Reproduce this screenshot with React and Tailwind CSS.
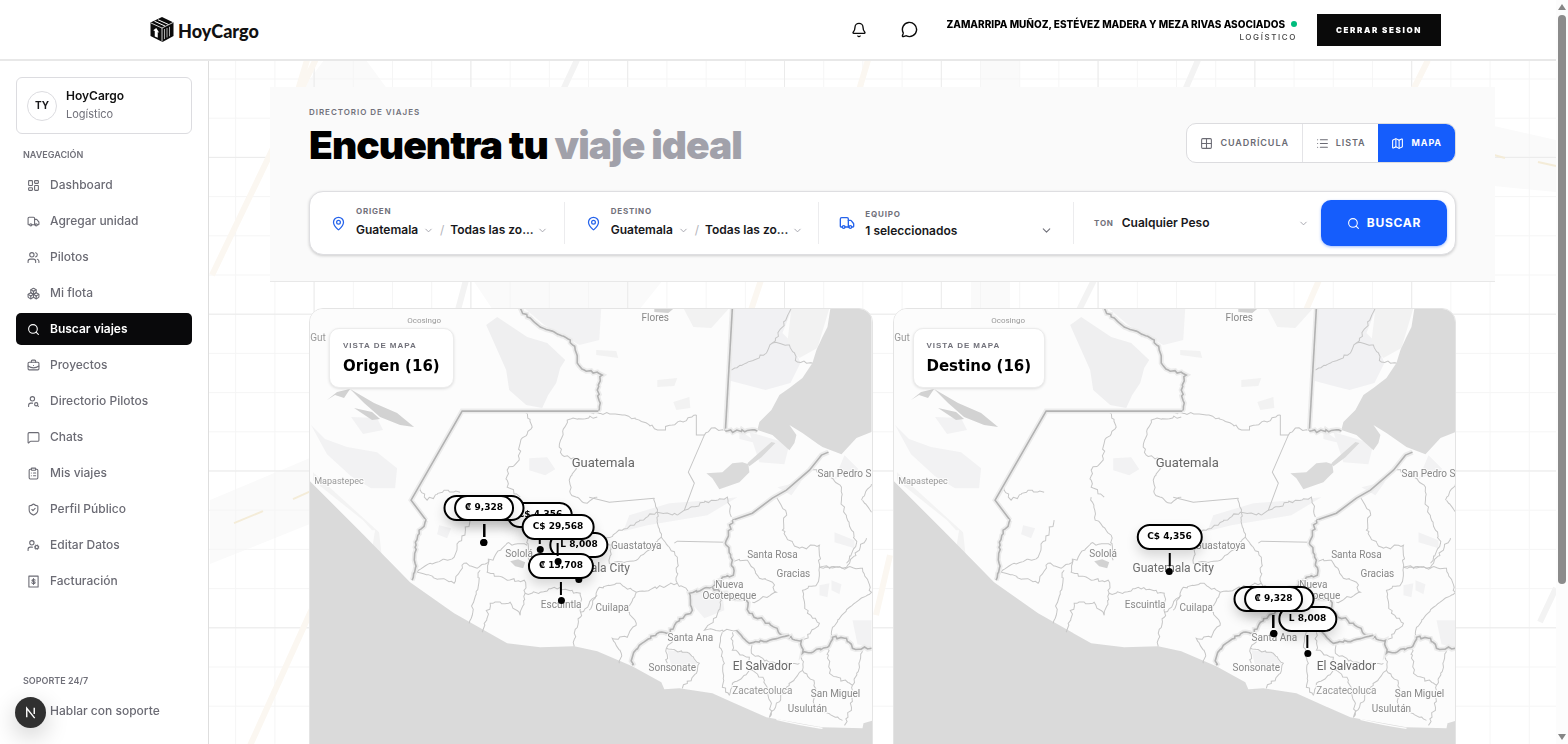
import {
  LayoutDashboard, Truck, Users, Boxes, Search, BriefcaseBusiness, UserSearch, MessageSquare,
  ClipboardList, ShieldCheck, UserCog, Bell, MessageCircle, Grid2x2, List, Map as MapIcon,
  MapPin, ChevronDown, Headphones,
} from "lucide-react";

const NAV = [
  ["Dashboard", LayoutDashboard],
  ["Agregar unidad", Truck],
  ["Pilotos", Users],
  ["Mi flota", Boxes],
  ["Buscar viajes", Search],
  ["Proyectos", BriefcaseBusiness],
  ["Directorio Pilotos", UserSearch],
  ["Chats", MessageSquare],
  ["Mis viajes", ClipboardList],
  ["Perfil Público", ShieldCheck],
  ["Editar Datos", UserCog],
  ["Facturación", InvoiceIcon],
];

function InvoiceIcon({ className, strokeWidth = 2 }) {
  return (
    <svg className={className} viewBox="0 0 24 24" fill="none" stroke="currentColor" strokeWidth={strokeWidth} strokeLinecap="round" strokeLinejoin="round" aria-hidden="true">
      <path d="M3.500 2h17v20h-17z" />
      <path d="M15 9.500c-.6-1-1.700-1.300-3-1.300-1.700 0-2.900.7-2.900 1.900 0 2.700 6 1.200 6 3.900 0 1.200-1.300 1.900-3.100 1.900-1.400 0-2.600-.5-3.200-1.500M12 6.500v11" />
    </svg>
  );
}

function Logo() {
  return (
    <a href="#inicio" className="flex items-center gap-1 text-[#111111]">
      <svg viewBox="0 0 48 50" className="h-[25px] w-6" aria-hidden="true">
        <path d="M24 0 47 11v27L25 50 1 38V11z" fill="#0b0b0b" />
        <path d="M2 12 24 22 46 11M24 22v27" stroke="#fff" strokeWidth="1.600" fill="none" />
        <path d="M9 8.500 30 18M16 5.500 37 15" stroke="#fff" strokeWidth="2" fill="none" />
        <path d="M29 24v20M34 22v19M39 19.500v19" stroke="#fff" strokeWidth="1.300" fill="none" />
        <path d="M9.500 39V28l-3-1.500 6-4.500 6 9.500-3-1.300v11.500z" fill="#fff" />
      </svg>
      <span className="pt-[2px] font-[Lato,sans-serif] text-[18px] font-black leading-6">HoyCargo</span>
    </a>
  );
}

function Header() {
  return (
    <header className="flex h-[61px] shrink-0 items-center justify-between border-b-2 border-[#e8e8e8] bg-white pl-[150px] pr-[115px]">
      <Logo />
      <div className="flex items-center">
        <button type="button" aria-label="Notificaciones" className="mr-[34px]"><Bell className="size-4" /></button>
        <button type="button" aria-label="Mensajes" className="mr-7"><MessageCircle className="size-[17px]" /></button>
        <div className="mr-5 flex flex-col items-end">
          <span className="flex items-center gap-[6px] text-[10px] font-extrabold leading-[14px] text-black">
            ZAMARRIPA MUÑOZ, ESTÉVEZ MADERA Y MEZA RIVAS ASOCIADOS
            <span className="size-[6px] rounded-full bg-emerald-500" />
          </span>
          <span className="text-[8px] font-medium leading-3 tracking-[0.2em] text-[#444444]">LOGÍSTICO</span>
        </div>
        <button type="button" className="h-8 w-[124px] bg-[#0a0a0a] text-[8px] font-black tracking-[0.2em] text-white">CERRAR SESION</button>
      </div>
    </header>
  );
}

function Sidebar() {
  return (
    <aside className="flex w-[209px] shrink-0 flex-col border-r border-[#dedede] bg-white px-4 pb-[17px] pt-4">
      <div className="flex h-[57px] items-center gap-[9px] rounded-md border border-[#dcdce0] px-[10px]">
        <span className="flex size-[30px] items-center justify-center rounded-full border border-[#dcdce0] text-[10px] font-bold text-[#18181b]">TY</span>
        <div className="flex flex-col pb-px">
          <strong className="text-[12px] font-semibold leading-[18px] text-[#111111]">HoyCargo</strong>
          <span className="text-[11px] leading-[18px] text-[#71717a]">Logístico</span>
        </div>
      </div>
      <h2 className="mb-[5px] mt-3 px-[7px] text-[9px] font-semibold leading-[18px] text-[#71717a]">NAVEGACIÓN</h2>
      <nav className="flex flex-col gap-1">
        {NAV.map(([label, Icon]) => (
          <a
            key={label}
            href="#nav"
            className={
              label === "Buscar viajes"
                ? "flex h-8 items-center gap-[10px] rounded-[5px] bg-[#09090b] px-[11px] text-[12px] font-semibold text-white"
                : "flex h-8 items-center gap-[10px] rounded-[5px] px-[11px] text-[12px] font-medium text-[#6b6b74]"
            }
          >
            <Icon className="size-[13px] shrink-0" strokeWidth={2} />
            {label}
          </a>
        ))}
      </nav>
      <h2 className="mb-[5px] mt-auto px-[7px] text-[9px] font-semibold leading-[18px] text-[#71717a]">SOPORTE 24/7</h2>
      <div className="relative">
        <a href="#soporte" className="flex h-8 items-center gap-[10px] px-[11px] text-[12px] font-medium text-[#6b6b74]">
          <Headphones className="size-[13px] shrink-0" />
          Hablar con soporte
        </a>
        <button type="button" aria-label="Herramientas" className="absolute -left-px top-[2px] flex size-[31px] items-center justify-center rounded-full bg-[#303030] shadow-[0_8px_24px_rgba(0,0,0,0.2)]">
          <svg viewBox="0 0 16 16" className="size-[15px]" fill="none" stroke="#fff" strokeWidth="1.500" aria-hidden="true">
            <path d="M4 13V3.500l8.500 10.500" />
            <path d="M12 3v6.500" />
          </svg>
        </button>
      </div>
    </aside>
  );
}

/* Blueprint style street pattern behind the page. */
function Backdrop() {
  return (
    <svg className="pointer-events-none fixed left-0 top-0 h-[744px] w-[1568px]" viewBox="0 0 1600 759" aria-hidden="true">
      <defs>
        <pattern id="minor" width="40" height="40" patternUnits="userSpaceOnUse"><path d="M40 0H0V40" fill="none" stroke="#f5f5f5" strokeWidth="2" /></pattern>
        <pattern id="major" width="160" height="160" patternUnits="userSpaceOnUse"><path d="M160 0H0V160" fill="none" stroke="#ebebeb" strokeWidth="2" /></pattern>
      </defs>
      <g transform="scale(1.0204)">
        <g fill="#fafafa">
          <path d="M324 60h42l22 30h-86zM980 60h39v30h-39zM210 500l100-42v66l-100 40zM473 280h190l-24 30H493zM971 280h39v30h-39zM1494 126l62 14v52l-62-6z" />
        </g>
      </g>
      <rect width="1600" height="759" fill="url(#minor)" />
      <rect width="1600" height="759" fill="url(#major)" />
      <g transform="scale(1.0204)" fill="none" strokeWidth="6">
        <path d="M325 40 212 275M325 580l-77 170M310 50l-12 40M868 60l-9 30M1428 60l-15 30M761 280l-10 30M1319 280l-13 30M890 555l-14 60" stroke="#fbf7f1" />
        <path d="M577 60l-14 30M1198 60l-13 30M466 280l-8 30M1094 280l-15 30M1556 588l-16 34" stroke="#f3f3f3" />
        <path d="M234 523l29-12M293 499l20-9M1494 155l11 3M1538 162l18 4" stroke="#f4ecd8" strokeWidth="2" />
      </g>
    </svg>
  );
}

function ViewToggle() {
  return (
    <div className="flex h-10 overflow-hidden rounded-[10px] border border-[#dcdcdf] bg-white text-[9px] font-semibold tracking-[0.1em] text-[#6b6b74]">
      <button type="button" className="flex items-center gap-[7px] border-r border-[#e4e4e7] px-[13px]"><Grid2x2 className="size-[13px]" />CUADRÍCULA</button>
      <button type="button" className="flex items-center gap-[7px] px-[13px]"><List className="size-[13px]" />LISTA</button>
      <button type="button" aria-pressed="true" className="flex items-center gap-[7px] bg-[#155dfc] px-[13px] font-bold text-white"><MapIcon className="size-[13px]" />MAPA</button>
    </div>
  );
}

function PlainSelect({ label, value, className }) {
  return (
    <span className="flex items-center gap-[3px]">
      <select aria-label={label} className={className}>
        <option>{value}</option>
      </select>
      <ChevronDown className="size-[11px] text-[#a1a1aa]" aria-hidden="true" />
    </span>
  );
}

function PlaceField({ title }) {
  return (
    <fieldset className="flex h-[42px] min-w-0 items-center gap-[10px] border-r border-[#ececee] pl-[21px]">
      <MapPin className="size-[15px] shrink-0 text-[#2563eb]" aria-hidden="true" />
      <div className="flex flex-col pb-1">
        <span className="text-[8px] font-bold leading-[18px] tracking-[0.1em] text-[#71717a]">{title}</span>
        <div className="flex items-center gap-[6px] text-[12px] font-semibold leading-5 text-[#18181b]">
          <PlainSelect label={"País de " + title.toLowerCase()} value="Guatemala" className="w-16 appearance-none bg-transparent" />
          <span className="font-normal text-[#b4b4bb]">/</span>
          <PlainSelect label={"Zona de " + title.toLowerCase()} value="Todas las zo..." className="w-[84px] appearance-none bg-transparent" />
        </div>
      </div>
    </fieldset>
  );
}

function SearchBar() {
  return (
    <form className="grid h-16 grid-cols-[minmax(0,1fr)_minmax(0,1fr)_minmax(0,1fr)_247px_126px] items-center rounded-[14px] border border-[#dedee1] bg-white pr-2 shadow-[0_1px_3px_rgba(0,0,0,0.18)]">
      <PlaceField title="ORIGEN" />
      <PlaceField title="DESTINO" />
      <div className="flex h-[42px] items-center gap-[10px] border-r border-[#ececee] pl-5 pr-5">
        <Truck className="size-4 shrink-0 text-[#2563eb]" aria-hidden="true" />
        <button type="button" className="flex flex-1 flex-col pb-px text-left">
          <span className="text-[8px] font-bold leading-4 tracking-[0.1em] text-[#71717a]">EQUIPO</span>
          <span className="flex w-full items-center justify-between text-[12px] font-semibold leading-[18px] text-[#18181b]">
            1 seleccionados
            <ChevronDown className="size-[13px] text-[#71717a]" />
          </span>
        </button>
      </div>
      <label className="flex h-[42px] items-center gap-2 pl-5">
        <span className="text-[8px] font-bold tracking-[0.1em] text-[#71717a]">TON</span>
        <select className="flex-1 appearance-none bg-transparent text-[12px] font-semibold text-[#18181b]">
          <option>Cualquier Peso</option>
        </select>
        <ChevronDown className="mr-3 size-[11px] text-[#a1a1aa]" aria-hidden="true" />
      </label>
      <button type="button" className="flex h-[46px] items-center justify-center gap-[7px] rounded-[10px] bg-[#155dfc] text-[12px] font-bold tracking-[0.06em] text-white shadow-[0_1px_3px_rgba(21,93,252,0.4)]">
        <Search className="size-[13px]" />
        BUSCAR
      </button>
    </form>
  );
}

/* Roughens a polyline so that it reads as a river or hill boundary. */
function jag(points, seed) {
  const nums = points.split(" ").map((p) => p.split(",").map(Number));
  let s = seed * 7919 + 13;
  const rnd = () => {
    s = (s * 1103515245 + 12345) % 2147483648;
    return s / 2147483648 - 0.5;
  };
  let d = "M" + nums[0].join(" ");
  for (let i = 1; i < nums.length; i++) {
    const [ax, ay] = nums[i - 1];
    const [bx, by] = nums[i];
    const steps = Math.max(1, Math.round(Math.hypot(bx - ax, by - ay) / 3));
    for (let k = 1; k <= steps; k++) {
      const t = k / steps;
      const j = k === steps ? 0 : 3;
      d += `L${(ax + (bx - ax) * t + rnd() * j).toFixed(1)} ${(ay + (by - ay) * t + rnd() * j).toFixed(1)}`;
    }
  }
  return d;
}

const REGIONS = [
  "590,412 623,415 640,420 662,430 673,425 697,415",
  "705,435 712,428 725,430",
  "678,515 657,512 623,530 590,545",
  "685,510 712,500 728,497 732,517",
  "655,498 658,512 658,520 662,537",
  "792,308 783,327 773,343 767,353 747,363 732,370",
  "773,343 790,345 798,362 813,363",
  "810,468 828,475 842,487 842,500 847,517 852,530 857,543 847,563",
  "777,497 787,513 783,530 787,537 800,548 820,545 820,567 847,567 867,538",
  "863,500 872,512",
  "872,484 862,500",
  "733,560 748,560 760,578 773,582 777,592 753,602",
  "820,567 818,583 803,590 808,613 820,623 803,642",
  "820,567 863,568 872,592 850,607 833,627 833,637",
  "590,530 612,545 610,563 637,560 662,537 678,557 678,583 637,592 617,583 600,587 590,610",
  "678,583 690,593",
  "637,592 627,610 637,623 628,637 613,638 622,653 620,663",
  "673,638 667,648 668,663",
  "667,648 690,653 700,663 697,673 683,688",
  "723,632 720,647 725,663 723,687 730,695",
  "733,632 733,650 750,657 753,670 733,683 730,695",
  "753,670 765,680 772,703 770,717 787,687 803,670 802,640",
  "803,670 815,683 815,707 843,720",
  "752,643 752,653 770,662 800,663",
  "828,647 830,673 853,685 860,667 862,648",
  "853,685 852,707 845,725",
  "737,630 705,630 717,617 722,600 713,588",
  "526,412 533,427 521,443 520,460 508,470 508,487 521,497",
  "598,417 568,420 560,447 563,455 581,460 570,480 571,493 588,503 598,497",
  "412,500 421,487 428,500 445,490 461,492",
  "471,520 458,547 455,557 431,563 418,572 455,583 465,563 478,568 495,557 508,543 528,545",
  "481,570 475,600 470,623",
  "490,560 488,572 508,580 525,580 526,593 541,592 555,587 581,593 581,617 575,633 575,646",
  "483,632 491,603 511,602 521,615 526,593",
  "581,612 598,595",
  "508,497 512,520 528,535 530,560",
];

const STRAIGHT = [
  "697,415 697,435 705,435 689,472 695,483 685,510 678,515",
  "590,497 610,502 655,498",
  "675,543 678,541 727,542",
];

const BORDERS = [
  ["521,308 528,317 541,327 555,332 571,340 576,350 578,363 585,370 598,372 603,375 598,390 601,403 599,411", true],
  ["599,411 463,411 412,500 427,520", false],
  ["427,520 420,530 416,547 416,563 413,580", true],
  ["733,308 726,431", false],
  ["726,431 758,431", true],
  ["829,452 822,455 810,470 787,490 773,498 753,513 733,520", false],
  ["733,520 726,543 733,560 734,575 723,577 713,587 690,593 693,610 677,622 671,633 660,632 640,645 633,657 633,665", true],
  ["713,587 733,598 747,600 750,613 770,623 783,635 802,640 803,653 828,647 833,637 847,638 853,648 872,648", true],
  ["737,630 750,643 770,640 790,635", true],
];

const LABELS = [
  ["Ocosingo", 425, 323, 8, "#999"],
  ["Flores", 656, 321, 10, "#888"],
  ["Gut", 319, 341, 10, "#999"],
  ["Mapastepec", 340, 484, 9, "#999"],
  ["Guatemala", 604, 467, 13, "#666"],
  ["San Pedro S", 845, 477, 10, "#888"],
  ["Guastatoya", 637, 549, 10, "#888"],
  ["Guatemala City", 590, 572, 12, "#6e6e6e"],
  ["Sololá", 520, 557, 10, "#888"],
  ["Santa Rosa", 773, 558, 10, "#888"],
  ["Gracias", 794, 577, 10, "#888"],
  ["Nueva", 730, 588, 10, "#888"],
  ["Ocotepeque", 730, 599, 10, "#888"],
  ["Cuilapa", 613, 611, 10, "#888"],
  ["Escuintla", 562, 608, 10, "#888"],
  ["Santa Ana", 691, 641, 10, "#888"],
  ["Sonsonate", 673, 671, 10, "#888"],
  ["El Salvador", 763, 670, 12, "#666"],
  ["Zacatecoluca", 763, 694, 10, "#999"],
  ["San Miguel", 836, 697, 10, "#888"],
  ["Usulután", 808, 712, 10, "#888"],
];

function Terrain() {
  return (
    <svg className="absolute left-0 top-0 h-[480px] w-full" viewBox="311 309 561 480" preserveAspectRatio="xMinYMin slice" aria-hidden="true">
      <rect x="310" y="308" width="580" height="490" fill="#fcfcfc" />
      <g fill="#f2f2f3">
        <path d="M487 325l11-8 30 20 20 6 18 17-5 8-4 15-8 12-6 13-16-3-17-15-3-20z" fill="#efeff0" />
        <path d="M525 308h77l-2 32-20 5-35-20z" />
        <path d="M733 308h60l-10 25 10 10 8 20-10 20-25 7-38-10z" fill="#f1f1f3" />
        <path d="M792 308h38l-12 40-18 10-12-16zM684 308h46l-18 20-18-1zM597 350l20 1 2 7-22-3zM674 402l16-5 1 11-14 2zM658 380l20-2-3 8-17 1z" fill="#f2f2f2" />
        <path d="M312 425l14 14 22 8 30 5 20 16-2 20-24 0-20-12-24-22zM352 417l26 1 6 12-20 4zM530 458l18-1 8 12-10 6-16-5z" />
        <path d="M630 515l40-12 40-3 28-3-30 18-60 10-24 6zM750 432l40 12-5 20-25-2zM778 487l24-6-10 14zM740 430l20 14-20-5z" />
        <path d="M693 590l30 4 2 16-20 8-12-14zM820 585l10-2-2 14-8-2zM832 580l10 4-2 10-8-4zM853 620h19v28l-14-4zM668 650l22 2 8 12-26 2zM835 532l20 8 0 8-20-6zM440 525l12 3-4 10-10-4zM845 455l14 14-24 10z" />
        <path d="M376 530l-3 0-9-10-50-40 0-8 66 60 4 35-12-12z" fill="#f3f3f3" />
      </g>
      <g fill="#dadada">
        <path d="M310 480l50 50 51 52 44 31 53 30 33 4 34-1 23 5 35 15 29 16 3 7 15-1 33 5 20 9 34 15 56 10 40 1 1-5 10-3V800H310z" />
        <path d="M831 308l-3 19-5 10-6 13-4 13-10 15-13 10-10 7-8 15-12 12-2 8 15 5 17 15 5-7 2-8-7-10 13 8 20 14 19 7 15-16 15-6V300h-41z" />
        <path d="M707 473l16-1 10-9 10-1 6 2 1 8-10 10-20 7-7-11zM748 463l10-9 14-12 4 1-14 14-12 9z" />
        <path d="M328 400l10-8 13-3 24 14 23 10 17 14-14-2-20-8-16-14-14-14-6 9-9-3zM355 408l18 4 8 7-8 1zM655 308h20l-6 5-14-1zM511 561l8-2 7 3-2 6-8-2z" fill="#d2d2d2" />
      </g>
      <path d="M777 719q20 5 46 9" stroke="#fcfcfc" strokeWidth="1.500" fill="none" />
      <g fill="none" stroke="#c6c6c6" strokeWidth="1">
        {REGIONS.map((r, i) => <path key={r} d={jag(r, i + 1)} />)}
        {STRAIGHT.map((r) => <polyline key={r} points={r} />)}
      </g>
      {BORDERS.map(([pts, rough], i) => {
        const d = rough ? jag(pts, i + 60) : "M" + pts.replace(/ /g, "L");
        return (
          <g key={pts} fill="none">
            <path d={d} stroke="#ececec" strokeWidth="5" />
            <path d={d} stroke="#b2b2b2" strokeWidth="1.600" />
          </g>
        );
      })}
      <g fontFamily="Roboto, sans-serif" textAnchor="middle" stroke="#fcfcfc" strokeWidth="2" paintOrder="stroke">
        {LABELS.map(([t, x, y, size, fill]) => <text key={t} x={x} y={y} fontSize={size} fill={fill}>{t}</text>)}
      </g>
    </svg>
  );
}

function Pin({ label, x, y, wide }) {
  return (
    <div className="absolute flex -translate-x-1/2 flex-col items-center" style={{ left: x, top: y }}>
      <button
        type="button"
        className={
          wide
            ? "h-[26px] w-[81px] rounded-full border-2 border-black bg-white shadow-[0_6px_12px_rgba(0,0,0,0.15)]"
            : "h-[26px] whitespace-nowrap rounded-full border-2 border-black bg-white px-[9px] font-['DejaVu_Sans',sans-serif] text-[9px] font-bold text-black shadow-[0_6px_12px_rgba(0,0,0,0.15)]"
        }
        aria-label={wide ? "Viaje" : undefined}
      >
        {label}
      </button>
      <span className="mt-[3px] h-[13px] w-[2px] bg-black" />
      <span className="mt-[2px] size-[7px] rounded-full bg-black" />
    </div>
  );
}

function MapCard({ title, pins }) {
  return (
    <section className="relative h-[480px] flex-1 overflow-hidden rounded-[14px] border border-[#e4e4e4] bg-[#fcfcfc]">
      <Terrain />
      {pins.map((p) => <Pin key={p.label + p.x} {...p} />)}
      <div className="absolute left-[19px] top-[19px] rounded-[10px] border border-[#ececec] bg-white px-[13px] py-[9px] shadow-[0_1px_3px_rgba(0,0,0,0.12)]">
        <p className="font-['Liberation_Sans',sans-serif] text-[8px] font-bold leading-4 tracking-[0.12em] text-[#71717a]">VISTA DE MAPA</p>
        <h2 className="font-['DejaVu_Sans',sans-serif] text-[15px] font-bold leading-6 text-black">{title}</h2>
      </div>
    </section>
  );
}

const ORIGIN_PINS = [
  { label: "C$ 4,356", x: 230, y: 193 },
  { label: "L 8,008", x: 269, y: 223 },
  { label: "₡ 13,708", x: 251, y: 244 },
  { label: "C$ 29,568", x: 248, y: 205 },
  { label: "", x: 174, y: 186, wide: true },
  { label: "₡ 9,328", x: 174, y: 186 },
];

const DESTINATION_PINS = [
  { label: "C$ 4,356", x: 276, y: 215 },
  { label: "L 8,008", x: 414, y: 297 },
  { label: "", x: 380, y: 277, wide: true },
  { label: "₡ 9,328", x: 380, y: 277 },
];

function Scrollbar() {
  return (
    <div className="relative z-10 flex w-3 shrink-0 flex-col items-center justify-between bg-[#fcfcfc] py-1" aria-hidden="true">
      <div className="flex flex-1 flex-col items-center gap-[5px]">
        <svg viewBox="0 0 8 6" className="h-[6px] w-2"><path d="M4 0l4 6H0z" fill="#858585" /></svg>
        <div className="h-[78%] w-2 rounded-full bg-[#8b8b8b]" />
      </div>
      <svg viewBox="0 0 8 6" className="h-[6px] w-2"><path d="M4 6l4-6H0z" fill="#858585" /></svg>
    </div>
  );
}

export default function App() {
  return (
    <div className="flex h-screen overflow-hidden bg-white font-[Inter,sans-serif] text-[#0a0a0a]">
      <Backdrop />
      <div className="relative flex min-w-0 flex-1 flex-col">
        <Header />
        <div className="flex min-h-0 flex-1">
          <Sidebar />
          <main className="min-w-0 flex-1 overflow-hidden px-4 pt-[26px]">
            <div className="mx-auto max-w-[1225px]">
              <div className="border-b border-[#e8e8e8] bg-[#fafafa] px-[39px] pb-[26px] pt-[17px]">
                <div className="flex items-end justify-between">
                  <div>
                    <p className="text-[8px] font-semibold leading-4 tracking-[0.12em] text-[#71717a]">DIRECTORIO DE VIAJES</p>
                    <h1 className="mt-[3px] text-[39px] font-black leading-[44px] tracking-tight text-black">
                      Encuentra tu <span className="text-[#a1a1aa]">viaje ideal</span>
                    </h1>
                  </div>
                  <div className="pb-1"><ViewToggle /></div>
                </div>
                <div className="mt-6"><SearchBar /></div>
              </div>
              <div className="flex gap-5 px-[39px] pt-[26px]">
                <MapCard title="Origen (16)" pins={ORIGIN_PINS} />
                <MapCard title="Destino (16)" pins={DESTINATION_PINS} />
              </div>
            </div>
          </main>
        </div>
      </div>
      <Scrollbar />
    </div>
  );
}
